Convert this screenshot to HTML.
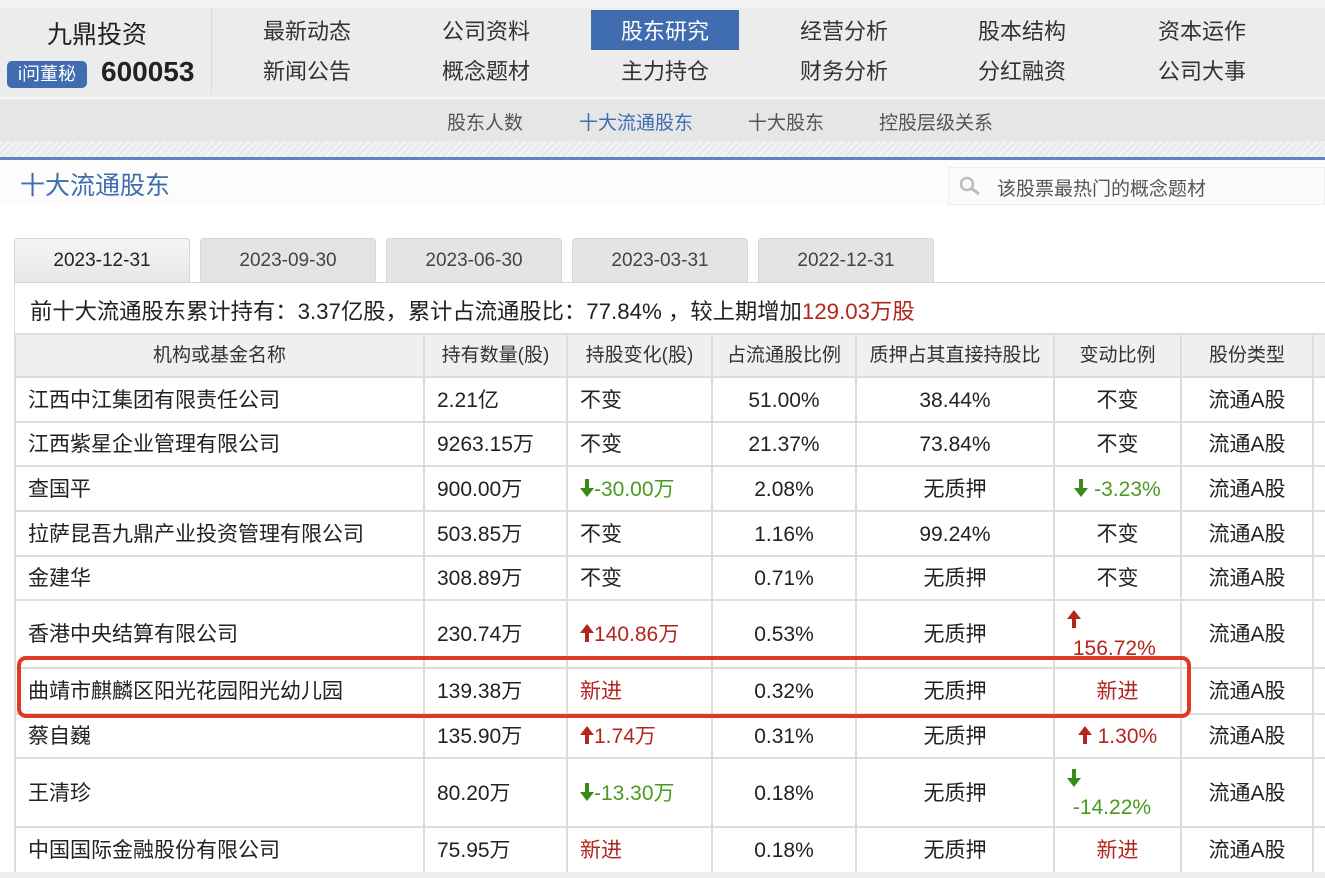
<!DOCTYPE html>
<html><head><meta charset="utf-8"><style>
*{margin:0;padding:0;box-sizing:border-box}
body{width:1325px;height:878px;overflow:hidden;background:#fff;font-family:"Liberation Sans","Noto Sans CJK SC",sans-serif;color:#222;position:relative}
.abs{position:absolute}
.top{left:0;top:0;width:1325px;height:97px;background:#ececec;border-top:8px solid #f3f3f3}
.logo{left:0;top:8px;width:212px;height:87px;border-right:1px solid #ddd}
.nav{font-size:22px;color:#333;text-align:center;width:150px;line-height:40px}
.sub{left:0;top:97px;width:1325px;height:44px;background:#e6e6e6;border-top:2px solid #f7f7f7}
.sub span{position:absolute;top:9px;font-size:19px;color:#555}
.stripe{left:0;top:141px;width:1325px;height:16px;background:repeating-linear-gradient(135deg,#f2f2f2 0 3px,#e8e8e8 3px 5px)}
.tab{top:238px;height:45px;width:176px;background:#e4e4e4;border:1px solid #d6d6d6;border-bottom:none;border-radius:4px 4px 0 0;text-align:center;line-height:44px;font-size:19px;color:#444}
table{position:absolute;left:14px;top:333px;width:1311px;border-collapse:collapse;font-size:21px;table-layout:fixed}
td{border:2px solid #ddd;padding:0 12px;white-space:nowrap;line-height:1.2;padding-top:2px}
tr.h td{background:#efefef;text-align:center;font-size:19px;color:#333}
.c{text-align:center}
.r{color:#b3261e}.g{color:#4b9a20}
svg{vertical-align:-1px}
</style></head><body>
<div class="abs top"></div>
<div class="abs logo">
 <div class="abs" style="left:47px;top:7px;font-size:25px;color:#222">九鼎投资</div>
 <div class="abs" style="left:7px;top:53px;width:80px;height:27px;background:#3f6db0;border-radius:5px;color:#fff;font-size:18px;text-align:center;line-height:27px">i问董秘</div>
 <div class="abs" style="left:101px;top:48px;font-size:28px;font-weight:bold;color:#222">600053</div>
</div>
<div class="abs" style="left:591px;top:10px;width:148px;height:40px;background:#3f6db0"></div>
<div class="abs nav" style="left:232px;top:12px">最新动态</div>
<div class="abs nav" style="left:411px;top:12px">公司资料</div>
<div class="abs nav" style="left:590px;top:12px;color:#fff">股东研究</div>
<div class="abs nav" style="left:769px;top:12px">经营分析</div>
<div class="abs nav" style="left:947px;top:12px">股本结构</div>
<div class="abs nav" style="left:1127px;top:12px">资本运作</div>
<div class="abs nav" style="left:232px;top:52px">新闻公告</div>
<div class="abs nav" style="left:411px;top:52px">概念题材</div>
<div class="abs nav" style="left:590px;top:52px">主力持仓</div>
<div class="abs nav" style="left:769px;top:52px">财务分析</div>
<div class="abs nav" style="left:947px;top:52px">分红融资</div>
<div class="abs nav" style="left:1127px;top:52px">公司大事</div>
<div class="abs sub">
 <span style="left:447px">股东人数</span>
 <span style="left:579px;color:#3f6db0">十大流通股东</span>
 <span style="left:748px">十大股东</span>
 <span style="left:879px">控股层级关系</span>
</div>
<div class="abs stripe"></div>
<div class="abs" style="left:0;top:157px;width:1325px;height:3px;background:#5b86c0"></div>
<div class="abs" style="left:0;top:160px;width:1325px;height:46px;background:#fcfcfc"></div>
<div class="abs" style="left:20px;top:166px;font-size:25px;color:#3f6db0">十大流通股东</div>
<div class="abs" style="left:948px;top:167px;width:377px;height:38px;border:1px solid #eee;background:#fbfbfb"></div>
<svg class="abs" style="left:958px;top:175px" width="24" height="22"><circle cx="9" cy="9" r="6" fill="none" stroke="#bbb" stroke-width="2.5"/><line x1="13" y1="13" x2="21" y2="19" stroke="#bbb" stroke-width="3"/></svg>
<div class="abs" style="left:997px;top:174px;font-size:19px;color:#555">该股票最热门的概念题材</div>
<div class="abs tab" style="left:14px;background:linear-gradient(#f6f6f6,#e6e6e6);color:#222">2023-12-31</div>
<div class="abs tab" style="left:200px">2023-09-30</div>
<div class="abs tab" style="left:386px">2023-06-30</div>
<div class="abs tab" style="left:572px">2023-03-31</div>
<div class="abs tab" style="left:758px">2022-12-31</div>
<div class="abs" style="left:14px;top:282px;width:1311px;height:1px;background:#d6d6d6"></div>
<div class="abs" style="left:14px;top:282px;width:1px;height:51px;background:#ddd"></div>
<div class="abs" style="left:30px;top:294px;font-size:22.3px;color:#222;white-space:nowrap">前十大流通股东累计持有：3.37亿股，累计占流通股比：77.84% ，较上期增加<span class="r">129.03万股</span></div>
<table>
<colgroup><col style="width:409px"><col style="width:143px"><col style="width:145px"><col style="width:144px"><col style="width:198px"><col style="width:127px"><col style="width:132px"><col style="width:13px"></colgroup>
<tr class="h" style="height:43px"><td>机构或基金名称</td><td>持有数量(股)</td><td>持股变化(股)</td><td>占流通股比例</td><td>质押占其直接持股比</td><td>变动比例</td><td>股份类型</td><td></td></tr>
<tr style="height:45px"><td>江西中江集团有限责任公司</td><td>2.21亿</td><td>不变</td><td class="c">51.00%</td><td class="c">38.44%</td><td class="c">不变</td><td class="c">流通A股</td><td></td></tr>
<tr style="height:44px"><td>江西紫星企业管理有限公司</td><td>9263.15万</td><td>不变</td><td class="c">21.37%</td><td class="c">73.84%</td><td class="c">不变</td><td class="c">流通A股</td><td></td></tr>
<tr style="height:45px"><td>查国平</td><td>900.00万</td><td class="g"><svg width="14" height="18"><path d="M5 0h4v9h5L7 18 0 9h5z" fill="#3a8a1a"/></svg>-30.00万</td><td class="c">2.08%</td><td class="c">无质押</td><td class="c g"><svg width="14" height="18"><path d="M5 0h4v9h5L7 18 0 9h5z" fill="#3a8a1a"/></svg> -3.23%</td><td class="c">流通A股</td><td></td></tr>
<tr style="height:45px"><td>拉萨昆吾九鼎产业投资管理有限公司</td><td>503.85万</td><td>不变</td><td class="c">1.16%</td><td class="c">99.24%</td><td class="c">不变</td><td class="c">流通A股</td><td></td></tr>
<tr style="height:44px"><td>金建华</td><td>308.89万</td><td>不变</td><td class="c">0.71%</td><td class="c">无质押</td><td class="c">不变</td><td class="c">流通A股</td><td></td></tr>
<tr style="height:68px"><td>香港中央结算有限公司</td><td>230.74万</td><td class="r"><svg width="14" height="18"><path d="M5 18h4V9h5L7 0 0 9h5z" fill="#b3261e"/></svg>140.86万</td><td class="c">0.53%</td><td class="c">无质押</td><td class="r" style="line-height:28px"><svg width="14" height="18"><path d="M5 18h4V9h5L7 0 0 9h5z" fill="#b3261e"/></svg><br>&nbsp;156.72%</td><td class="c">流通A股</td><td></td></tr>
<tr style="height:46px"><td>曲靖市麒麟区阳光花园阳光幼儿园</td><td>139.38万</td><td class="r">新进</td><td class="c">0.32%</td><td class="c">无质押</td><td class="c r">新进</td><td class="c">流通A股</td><td></td></tr>
<tr style="height:44px"><td>蔡自巍</td><td>135.90万</td><td class="r"><svg width="14" height="18"><path d="M5 18h4V9h5L7 0 0 9h5z" fill="#b3261e"/></svg>1.74万</td><td class="c">0.31%</td><td class="c">无质押</td><td class="c r"><svg width="14" height="18"><path d="M5 18h4V9h5L7 0 0 9h5z" fill="#b3261e"/></svg> 1.30%</td><td class="c">流通A股</td><td></td></tr>
<tr style="height:69px"><td>王清珍</td><td>80.20万</td><td class="g"><svg width="14" height="18"><path d="M5 0h4v9h5L7 18 0 9h5z" fill="#3a8a1a"/></svg>-13.30万</td><td class="c">0.18%</td><td class="c">无质押</td><td class="g" style="line-height:28px"><svg width="14" height="18"><path d="M5 0h4v9h5L7 18 0 9h5z" fill="#3a8a1a"/></svg><br>&nbsp;-14.22%</td><td class="c">流通A股</td><td></td></tr>
<tr style="height:46px"><td>中国国际金融股份有限公司</td><td>75.95万</td><td class="r">新进</td><td class="c">0.18%</td><td class="c">无质押</td><td class="c r">新进</td><td class="c">流通A股</td><td></td></tr>
</table>
<div class="abs" style="left:0;top:872px;width:1325px;height:6px;background:#eee"></div>
<div class="abs" style="left:17px;top:656px;width:1174px;height:62px;border:4px solid #e03a22;border-radius:9px"></div>
</body></html>
